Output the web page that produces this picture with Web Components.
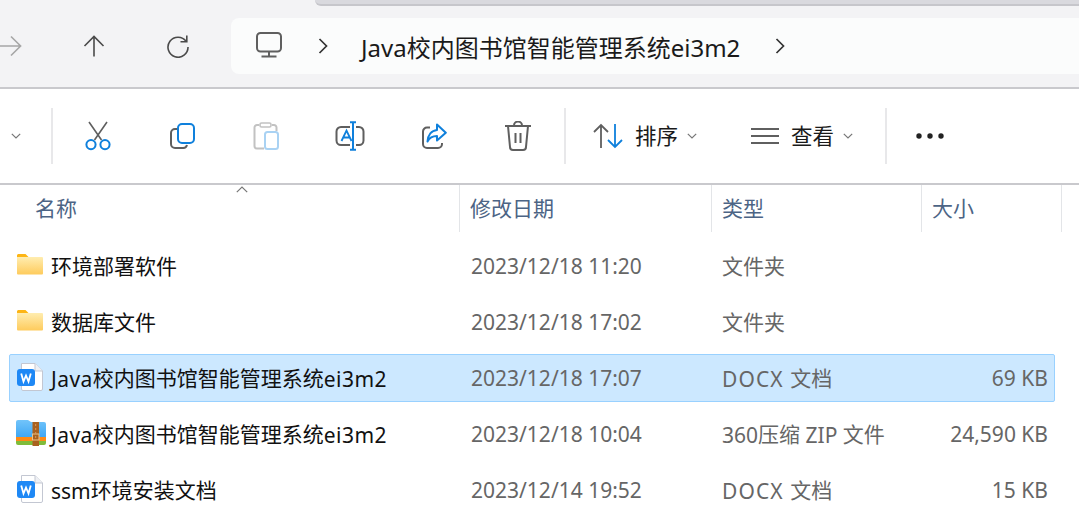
<!DOCTYPE html>
<html lang="zh">
<head>
<meta charset="utf-8">
<title>Java校内图书馆智能管理系统ei3m2</title>
<style>
  html, body { margin: 0; background: #fff; }
  body {
    width: 1079px; height: 526px; overflow: hidden;
    font-family: "Noto Sans", "Noto Sans CJK SC", sans-serif;
  }
</style>
</head>
<body>
<win-nav path="Java校内图书馆智能管理系统ei3m2"></win-nav>
<win-toolbar></win-toolbar>
<file-header></file-header>
<file-list>
  <file-row icon="folder" name="环境部署软件" date="2023/12/18 11:20" type="文件夹"></file-row>
  <file-row icon="folder" name="数据库文件" date="2023/12/18 17:02" type="文件夹"></file-row>
  <file-row icon="word" selected name="Java校内图书馆智能管理系统ei3m2" date="2023/12/18 17:07" type="DOCX 文档" size="69 KB"></file-row>
  <file-row icon="zip" name="Java校内图书馆智能管理系统ei3m2" date="2023/12/18 10:04" type="360压缩 ZIP 文件" size="24,590 KB"></file-row>
  <file-row icon="word" name="ssm环境安装文档" date="2023/12/14 19:52" type="DOCX 文档" size="15 KB"></file-row>
</file-list>

<script>
const GREY = '#5f5f5f';
const BLUE = '#0f80dc';

function fmt(text) {
  return text
    .replace(/[A-Za-z0-9]{4,}/g, '<span class="latin">$&</span>')
    .replace(/[\u4e00-\u9fff]+/g, '<span class="cjk">$&</span>');
}

class WinNav extends HTMLElement {
  connectedCallback() {
    this.attachShadow({ mode: 'open' });
    this.shadowRoot.innerHTML = `
      <style>
        :host { display: block; height: 87px; background: #f3f3f5; border-bottom: 2px solid #c9c9cd; }
        .tab { height: 4px; margin-left: 315px; background: #d9d9de; border-bottom: 2px solid #c6c6cb; border-bottom-left-radius: 8px; }
        .main { display: flex; align-items: center; height: 56px; margin-top: 12px; }
        .btn { display: flex; justify-content: center; align-items: center; flex: none; }
        .back { width: 22px; }
        .up { width: 24px; margin-left: 60px; }
        .refresh { width: 24px; margin-left: 60px; }
        .address { flex: 1; margin-left: 41px; height: 56px; background: #fbfcfc; border-radius: 8px 0 0 8px; display: flex; align-items: center; padding-left: 25px; }
        .pc { margin-bottom: 2px; }
        .path { font-size: 24px; color: #1a1a1a; margin-left: 33px; margin-right: 35px; white-space: nowrap; }
        .crumb { margin-left: 36px; }
        svg { display: block; }
      </style>
      <div class="tab"></div>
      <div class="main">
        <div class="btn back"><svg width="22" height="22" viewBox="0 0 22 22" fill="none" stroke="#a6a6a6" stroke-width="1.6"><path d="M0 11H20.5M11 1.5 20.6 11 11 20.5"/></svg></div>
        <div class="btn up"><svg width="22" height="22" viewBox="0 0 22 22" fill="none" stroke="#4a4a4a" stroke-width="1.6"><path d="M11 21.5V1.5M1.5 11 11 1.5 20.5 11"/></svg></div>
        <div class="btn refresh"><svg width="24" height="24" viewBox="0 0 24 24" fill="none" stroke="#4a4a4a" stroke-width="1.6"><path d="M20.2 7.5A10 10 0 1 0 22 13"/><path d="M20.8 1.5V7.8H14.5"/></svg></div>
        <div class="address">
          <svg class="pc" width="26" height="26" viewBox="0 0 26 26" fill="none" stroke="${GREY}" stroke-width="2"><rect x="1" y="1" width="24" height="18.5" rx="3.5"/><path d="M13 20V24M5.5 24.6H20.5"/></svg>
          <svg class="crumb" width="10" height="16" viewBox="0 0 10 16" fill="none" stroke="#333" stroke-width="1.7"><path d="M1.5 1 8.5 8 1.5 15"/></svg>
          <span class="path">${this.getAttribute('path')}</span>
          <svg width="10" height="16" viewBox="0 0 10 16" fill="none" stroke="#333" stroke-width="1.7"><path d="M1.5 1 8.5 8 1.5 15"/></svg>
        </div>
      </div>
    `;
  }
}

class ToolBtn extends HTMLElement {
  connectedCallback() {
    this.attachShadow({ mode: 'open' });
    this.shadowRoot.innerHTML = `
      <style>
        :host { display: flex; align-items: center; justify-content: center; flex: none; width: 84px; height: 56px; }
      </style>
      <slot></slot>
    `;
  }
}

class WinToolbar extends HTMLElement {
  connectedCallback() {
    const caret = `<svg width="10" height="6" viewBox="0 0 10 6" fill="none" stroke="#777" stroke-width="1.2"><path d="M.8.8 5 5 9.2.8"/></svg>`;
    this.attachShadow({ mode: 'open' });
    this.shadowRoot.innerHTML = `
      <style>
        :host { display: flex; align-items: center; height: 94px; border-bottom: 2px solid #c9c9cd; background: #fff; }
        .more { width: 51px; display: flex; padding-left: 11px; box-sizing: border-box; }
        .sep { width: 2px; height: 56px; background: #e8e8ea; flex: none; }
        .menu { display: flex; align-items: center; font-size: 21.5px; color: #1a1a1a; flex: none; line-height: 28px; }
        .menu span { margin: 0 9px 0 12px; }
        .sort { margin-left: 27px; }
        .view { margin-left: 54px; }
        .dots { margin-left: 29px; display: flex; }
        svg { display: block; }
      </style>
      <div class="more">${caret}</div>
      <div class="sep"></div>
      <tool-btn style="margin-left:3px">
        <svg width="26" height="30" viewBox="0 0 26 30" fill="none"><path d="M4 1 16.5 19M22 1 9.5 19" stroke="${GREY}" stroke-width="1.6"/><circle cx="6" cy="23.6" r="4.6" stroke="${BLUE}" stroke-width="2"/><circle cx="20" cy="23.6" r="4.6" stroke="${BLUE}" stroke-width="2"/></svg>
      </tool-btn>
      <tool-btn>
        <svg width="26" height="26" viewBox="0 0 26 26" fill="none"><path d="M8 6H6A4 4 0 0 0 2 10V21A4 4 0 0 0 6 25H14A4 4 0 0 0 18 22" stroke="${GREY}" stroke-width="2"/><rect x="9" y="1" width="16" height="19" rx="4" stroke="${BLUE}" stroke-width="2"/></svg>
      </tool-btn>
      <tool-btn>
        <svg width="26" height="28" viewBox="0 0 26 28" fill="none"><path d="M6 3H4A2.5 2.5 0 0 0 1.5 5.500V24A2.500 2.500 0 0 0 4 26.500H11M19 3H21A2.500 2.500 0 0 1 23.500 5.500V9" stroke="#c2c2c2" stroke-width="2"/><rect x="7" y="1" width="11" height="4" rx="1.500" stroke="#c2c2c2" stroke-width="1.600"/><rect x="12" y="10" width="13" height="17" rx="2.500" stroke="#a9d2f3" stroke-width="2"/></svg>
      </tool-btn>
      <tool-btn>
        <svg width="30" height="30" viewBox="0 0 30 30" fill="none"><path d="M15 6H6A4.500 4.500 0 0 0 1.500 10.500V19.500A4.500 4.500 0 0 0 6 24H15M21 6H24A4.500 4.500 0 0 1 28.500 10.500V19.500A4.500 4.500 0 0 1 24 24H21" stroke="${GREY}" stroke-width="2"/><path d="M6.500 20 11.500 9.500 16.500 20M8.200 16.500H15" stroke="${BLUE}" stroke-width="1.800"/><path d="M18 1V29M15 1.200H21M15 28.800H21" stroke="${BLUE}" stroke-width="2"/></svg>
      </tool-btn>
      <tool-btn>
        <svg width="26" height="26" viewBox="0 0 26 26" fill="none"><path d="M9 4.500H6A4 4 0 0 0 2 8.500V21A4 4 0 0 0 6 25H17A4 4 0 0 0 21 21V20" stroke="${GREY}" stroke-width="2"/><path d="M16 1.500 24.800 9.800 16 17.500V13C11.500 13 8.500 14.500 6.500 18.500 7 12 10.500 7.500 16 7Z" stroke="${BLUE}" stroke-width="2" stroke-linejoin="round"/></svg>
      </tool-btn>
      <tool-btn>
        <svg width="26" height="30" viewBox="0 0 26 30" fill="none" stroke="${GREY}" stroke-width="2"><path d="M0 5H26M9 4.500A4 4 0 0 1 17 4.500"/><path d="M3 5 5 26A3 3 0 0 0 8 29H18A3 3 0 0 0 21 26L23 5"/><path d="M10.500 12V22M15.500 12V22"/></svg>
      </tool-btn>
      <div class="sep" style="margin-left:4px"></div>
      <div class="menu sort">
        <svg width="30" height="26" viewBox="0 0 30 26" fill="none" stroke-width="1.800"><path d="M8 25V2M1 9 8 2 15 9" stroke="${GREY}"/><path d="M22 1V24M15 17 22 24 29 17" stroke="${BLUE}"/></svg>
        <span>排序</span>${caret}
      </div>
      <div class="menu view">
        <svg width="28" height="18" viewBox="0 0 28 18" fill="none" stroke="${GREY}" stroke-width="1.800"><path d="M0 2H28M0 9H28M0 16H28"/></svg>
        <span>查看</span>${caret}
      </div>
      <div class="sep" style="margin-left:32px"></div>
      <div class="dots">
        <svg width="28" height="6" viewBox="0 0 28 6" fill="#222"><circle cx="3" cy="3" r="2.700"/><circle cx="14" cy="3" r="2.700"/><circle cx="25" cy="3" r="2.700"/></svg>
      </div>
    `;
  }
}

class FileHeader extends HTMLElement {
  connectedCallback() {
    this.attachShadow({ mode: 'open' });
    this.shadowRoot.innerHTML = `
      <style>
        :host { display: grid; grid-template-columns: 460px 252px 210px 140px; height: 47px; position: relative; color: #4c6485; font-size: 21px; }
        div { display: flex; align-items: center; border-right: 1px solid #e3e5e8; padding: 0 0 4px 10px; box-sizing: border-box; white-space: nowrap; }
        div:first-of-type { padding-left: 35px; }
        svg { position: absolute; left: 236px; top: 1px; }
      </style>
      <div>名称</div>
      <div>修改日期</div>
      <div>类型</div>
      <div>大小</div>
      <svg width="12" height="7" viewBox="0 0 12 7" fill="none" stroke="#777" stroke-width="1.200"><path d="M.8 6.200 6 1 11.200 6.200"/></svg>
    `;
  }
}

class FileList extends HTMLElement {
  connectedCallback() {
    this.attachShadow({ mode: 'open' });
    this.shadowRoot.innerHTML = `
      <style>
        :host { display: flex; flex-direction: column; gap: 8px; padding: 10px 24px 0 9px; }
      </style>
      <slot></slot>
    `;
  }
}

class FileIcon extends HTMLElement {
  connectedCallback() {
    const kind = this.getAttribute('kind');
    const icons = {
      folder: `<svg width="26" height="21" viewBox="0 0 26 21">
        <defs><linearGradient id="f" x1="0" y1="0" x2="0" y2="1"><stop offset="0" stop-color="#ffedb0"/><stop offset="1" stop-color="#fecb5c"/></linearGradient></defs>
        <path d="M1 0H8.500L11.500 3H25V4H0V1Z" fill="#fdb515"/>
        <path d="M0 3H25A1 1 0 0 1 26 4V19.500A1 1 0 0 1 25 20.500H1A1 1 0 0 1 0 19.500Z" fill="url(#f)"/></svg>`,
      word: `<svg width="26" height="28" viewBox="0 0 26 28">
        <path d="M4.500.5H18L25.500 8V26A1.500 1.500 0 0 1 24 27.500H6A1.500 1.500 0 0 1 4.500 26Z" fill="#fff" stroke="#c3c7d2"/>
        <path d="M18 .5V8H25.500" fill="#eef0f4" stroke="#c3c7d2"/>
        <rect x="0" y="6" width="18" height="17" rx="3" fill="#1e88f5"/>
        <path d="M4.200 10.500 6.500 18.500 9 12.500 11.500 18.500 13.800 10.500" fill="none" stroke="#fff" stroke-width="1.800"/></svg>`,
      zip: `<svg width="30" height="26" viewBox="0 0 30 26">
        <defs><linearGradient id="z" x1="0" y1="0" x2="0" y2="1"><stop offset="0" stop-color="#72c4fa"/><stop offset="1" stop-color="#3aa4f3"/></linearGradient></defs>
        <path d="M2 0H12L15 2H28A2 2 0 0 1 30 4V19H0V2A2 2 0 0 1 2 0Z" fill="url(#z)"/>
        <rect x="0" y="17" width="30" height="4" fill="#ff8a14"/>
        <path d="M0 21H30V23A2 2 0 0 1 28 25H2A2 2 0 0 1 0 23Z" fill="#7fbc3a"/>
        <rect x="16.500" y="2" width="6.500" height="24" fill="#a9611f"/>
        <rect x="16.500" y="14" width="6.500" height="6" fill="none" stroke="#e9c48d" stroke-width="1"/>
        <path d="M19.700 4V18" stroke="#d39a5e" stroke-dasharray="2 2"/></svg>`
    };
    this.attachShadow({ mode: 'open' });
    this.shadowRoot.innerHTML = `
      <style>
        :host { display: flex; align-items: center; flex: none; width: 34px; }
        svg { display: block; }
        .word, .zip { margin-bottom: 2px; }
        .folder { margin-bottom: 4px; }
        .zip { margin-left: -1px; }
      </style>
      <div class="${kind}">${icons[kind]}</div>
    `;
  }
}

class FileRow extends HTMLElement {
  connectedCallback() {
    const attr = (n) => this.getAttribute(n) || '';
    this.attachShadow({ mode: 'open' });
    this.shadowRoot.innerHTML = `
      <style>
        :host { display: grid; grid-template-columns: 461px 251px 200px 126px; align-items: center; height: 48px; box-sizing: border-box; border: 1px solid transparent; border-radius: 2px; font-size: 21px; line-height: 30px; color: #666; white-space: nowrap; }
        :host([selected]) { background: #cce8ff; border-color: #99d1ff; }
        .name { display: flex; align-items: center; padding-left: 7px; color: #111; }
        .size { text-align: right; }
        .cjk { vertical-align: 1px; }
        .name .latin { letter-spacing: .45px; }
        .type .latin { letter-spacing: 1.1px; margin-right: 1px; }
      </style>
      <div class="name"><file-icon kind="${attr('icon')}"></file-icon><span>${fmt(attr('name'))}</span></div>
      <div>${attr('date')}</div>
      <div class="type">${fmt(attr('type'))}</div>
      <div class="size">${attr('size')}</div>
    `;
  }
}

customElements.define('win-nav', WinNav);
customElements.define('tool-btn', ToolBtn);
customElements.define('win-toolbar', WinToolbar);
customElements.define('file-header', FileHeader);
customElements.define('file-list', FileList);
customElements.define('file-icon', FileIcon);
customElements.define('file-row', FileRow);
</script>
</body>
</html>
